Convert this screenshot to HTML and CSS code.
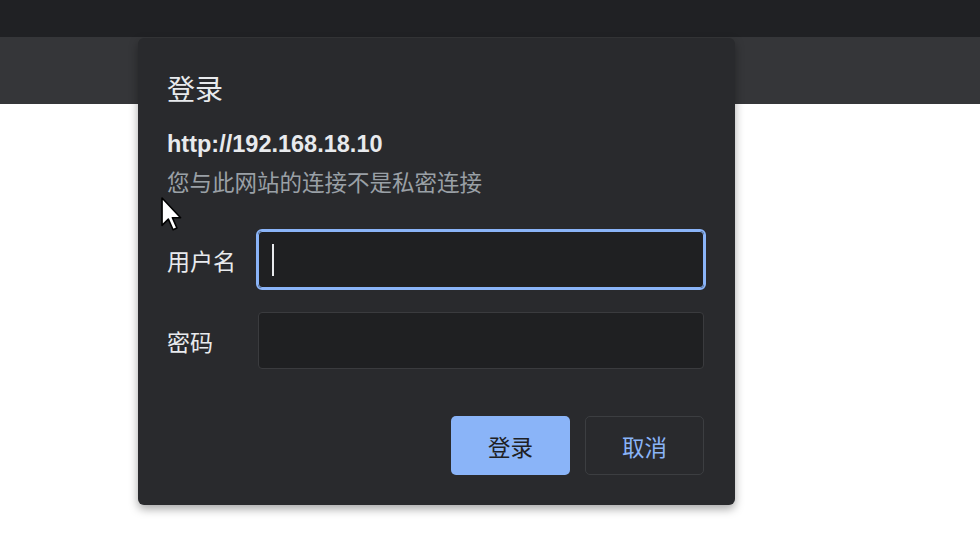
FILE: index.html
```html
<!DOCTYPE html>
<html lang="zh-CN">
<head>
<meta charset="utf-8">
<title>登录</title>
<link rel="stylesheet" href="styles.css">
</head>
<body>
<div class="topbar"></div>
<div class="toolbar"></div>
<div class="page"></div>

<div class="dialog">
  <div class="title">登录</div>
  <div class="origin">http://192.168.18.10</div>
  <div class="note">您与此网站的连接不是私密连接</div>
  <div class="row row-user">
    <div class="label">用户名</div>
    <div class="field focused"><span class="caret"></span></div>
  </div>
  <div class="row row-pass">
    <div class="label">密码</div>
    <div class="field"></div>
  </div>
  <div class="actions">
    <div class="btn primary">登录</div>
    <div class="btn secondary">取消</div>
  </div>
</div>

<svg class="cursor" width="21" height="34" viewBox="0 0 12 19.4">
  <path d="M0.6 0.6 L0.6 16.2 L4.2 12.6 L6.9 18.7 L9.1 17.7 L6.5 11.8 L11.2 11.8 Z" fill="#ffffff" stroke="#000000" stroke-width="0.9" stroke-linejoin="round"/>
</svg>
</body>
</html>
```

FILE: styles.css
```css
html, body {
  margin: 0;
  padding: 0;
  width: 980px;
  height: 544px;
  overflow: hidden;
  background: #ffffff;
  font-family: "Noto Sans CJK SC", "Liberation Sans", sans-serif;
}

.topbar {
  height: 37px;
  background: #202124;
}

.toolbar {
  height: 67px;
  background: #353639;
}

.page {
  height: 440px;
  background: #ffffff;
}

.dialog {
  position: absolute;
  left: 138px;
  top: 38px;
  width: 537px;
  padding: 34px 31px 30px 29px;
  background: #292a2d;
  border-radius: 6px;
  box-shadow: 0 4px 10px rgba(0, 0, 0, 0.35);
  display: flex;
  flex-direction: column;
}

.title {
  font-size: 28px;
  line-height: 32px;
  height: 32px;
  color: #e8eaed;
}

.origin {
  margin-top: 25px;
  font-family: "Liberation Sans", sans-serif;
  font-weight: bold;
  font-size: 23.5px;
  line-height: 30px;
  height: 30px;
  color: #e8eaed;
}

.note {
  margin-top: 8px;
  font-size: 22.5px;
  line-height: 28px;
  height: 28px;
  color: #9aa0a6;
}

.row {
  display: flex;
  align-items: center;
  height: 57px;
}

.row-user {
  margin-top: 36px;
}

.row-pass {
  margin-top: 24px;
}

.label {
  width: 91px;
  flex: none;
  font-size: 23px;
  line-height: 28px;
  color: #e8eaed;
}

.field {
  box-sizing: border-box;
  width: 446px;
  height: 57px;
  background: #1f2022;
  border: 1px solid #3a3b3e;
  border-radius: 4px;
  display: flex;
  align-items: center;
  padding-left: 13px;
}

.field.focused {
  border-color: #8ab4f8;
  outline: 2px solid #8ab4f8;
  outline-offset: 0;
  border-radius: 4px;
}

.caret {
  width: 2px;
  height: 32px;
  background: #e8eaed;
}

.actions {
  margin-top: 47px;
  display: flex;
  justify-content: flex-end;
  gap: 15px;
}

.btn {
  box-sizing: border-box;
  width: 119px;
  height: 59px;
  border-radius: 5px;
  display: flex;
  align-items: center;
  justify-content: center;
  font-size: 22.5px;
}

.btn.primary {
  background: #8ab4f8;
  color: #202124;
}

.btn.secondary {
  border: 1px solid #3c3e41;
  color: #8ab4f8;
}

.cursor {
  position: absolute;
  left: 161px;
  top: 197px;
}
```
